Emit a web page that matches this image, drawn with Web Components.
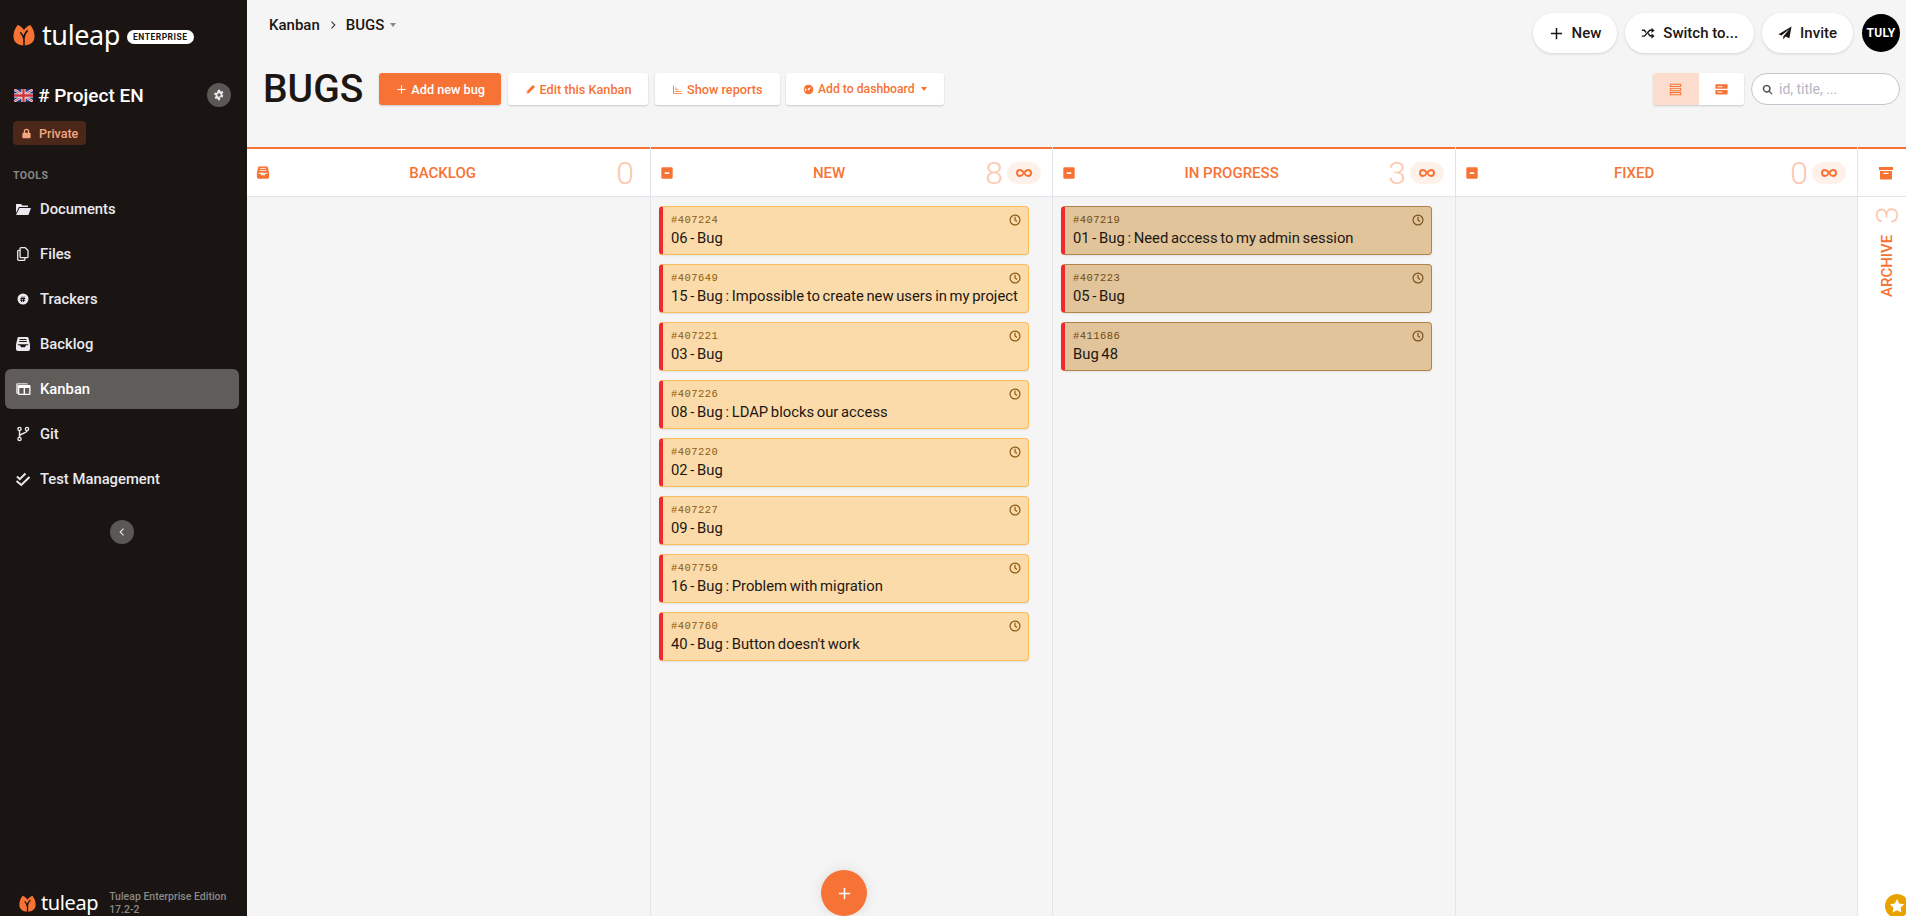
<!DOCTYPE html>
<html>
<head>
<meta charset="utf-8">
<title>BUGS - Kanban</title>
<style>
  html, body { margin: 0; height: 100%; overflow: hidden; }
  body { font-family: Roboto, "Liberation Sans", sans-serif; background: #f5f5f5; color: #1c1713; }
</style>
</head>
<body>
<tuleap-app>
  <tuleap-sidebar slot="sidebar"></tuleap-sidebar>
  <top-bar slot="top"></top-bar>
  <kanban-toolbar slot="top"></kanban-toolbar>
  <kanban-board slot="board"></kanban-board>
</tuleap-app>

<script>
  // small shared icon set, 16x16 boxes filled with currentColor
  const ICONS = {
    folder: '<path d="M1 3h5l1.500 1.500H13V6H4L1 12zM4.600 7H16l-2.600 7H1z"/>',
    files: '<path fill="none" stroke="currentColor" stroke-width="1.300" d="M6 1.700h4.200L13 4.500v6.200a.9.900 0 0 1-.9.900H6a.9.900 0 0 1-.9-.9V2.600a.9.900 0 0 1 .9-.9zM5 4.400H3.600a.9.900 0 0 0-.9.900v8.100a.9.900 0 0 0 .9.900H9a.9.900 0 0 0 .9-.9v-1.600"/>',
    tracker: '<path fill-rule="evenodd" d="M8 2.500a5.500 5.500 0 1 1 0 11 5.500 5.500 0 0 1 0-11zM6.600 5.600 6.400 6.900H5.400v1h.9l-.1.900h-1v1h.9l-.2 1.200h1l.2-1.200h1l-.2 1.200h1l.2-1.200h1v-1h-.9l.1-.9h1v-1h-.9l.2-1.300h-1l-.2 1.300h-1l.2-1.300zM7.200 7.900h1l-.1.900h-1z"/>',
    backlog: '<path fill-rule="evenodd" d="M3.600 1h8.800a1 1 0 0 1 1 .8l1.600 6.700V13a2 2 0 0 1-2 2H3a2 2 0 0 1-2-2V8.500l1.600-6.700a1 1 0 0 1 1-.8zM4.500 3v1h7V3zM4.200 5v1h7.600V5zM3 8.200l-.4 1H5l1 2h4l1-2h2.400l-.4-1z"/>',
    kanban: '<path opacity=".65" d="M1 3.500A1.500 1.500 0 0 1 2.500 2h9A1.500 1.500 0 0 1 13 3.500H3V13a1.500 1.500 0 0 1-2-1.500z"/><path fill-rule="evenodd" d="M4 4h10.500a1 1 0 0 1 1 1v8a1 1 0 0 1-1 1H4a1 1 0 0 1-1-1V5a1 1 0 0 1 1-1zm.3 3v5.700h4.300V7zm5.700 0v5.700h4.200V7z"/>',
    git: '<circle cx="4.500" cy="3" r="1.600" fill="none" stroke="currentColor" stroke-width="1.400"/><circle cx="4.500" cy="13" r="1.600" fill="none" stroke="currentColor" stroke-width="1.400"/><circle cx="12" cy="3" r="1.600" fill="none" stroke="currentColor" stroke-width="1.400"/><path fill="none" stroke="currentColor" stroke-width="1.400" d="M4.500 4.600v6.800M12 4.600c0 3.400-7.500 2.400-7.500 5.600"/>',
    check: '<path fill="none" stroke="currentColor" stroke-width="2" d="M2 5.500l2.800 2.700L10.500 2.500M1.500 10l4.800 4L14.500 6"/>',
    plus: '<path d="M7.200 2h1.600v5.200H14v1.600H8.800V14H7.200V8.800H2V7.200h5.200z"/>',
    shuffle: '<path d="M1 4h3l2.300 2.700-1.100 1.200L3.400 5.600H1zm8.600 0H12V2l3.500 3L12 8V5.600H10.400L4.300 12.400H1v-1.600h2.600zM7.800 9l1.100-1.200 1.500 2.600H12V8.500l3.500 3L12 14.500V12H9.600z"/>',
    send: '<path d="M15.500.5 13 14l-4.500-2-2.500 3.500V12L13 3.500 4 10.800.5 9.300z"/>',
    gear: '<path fill-rule="evenodd" d="M9.300 1l.4 1.800 1 .6 1.800-.6 1.300 2.300-1.400 1.200v1.400l1.400 1.200-1.300 2.300-1.800-.6-1 .6L9.300 15H6.700l-.4-1.800-1-.6-1.800.6-1.300-2.300 1.400-1.200V8.300L1.200 7.100l1.300-2.300 1.800.6 1-.6L6.700 1zM8 5.800a2.200 2.200 0 1 0 0 4.400 2.200 2.200 0 0 0 0-4.400z"/>',
    lock: '<path fill-rule="evenodd" d="M8 1a4 4 0 0 1 4 4v2h.5A1.500 1.500 0 0 1 14 8.500v5a1.500 1.500 0 0 1-1.500 1.500h-9A1.500 1.500 0 0 1 2 13.500v-5A1.500 1.500 0 0 1 3.500 7H4V5a4 4 0 0 1 4-4zm0 2a2 2 0 0 0-2 2v2h4V5a2 2 0 0 0-2-2z"/>',
    pencil: '<path d="M11.500 1.500l3 3L6 13l-4.500 1.500L3 10zM2.800 11.500l-.6 2.200 2.200-.6z"/>',
    chart: '<path d="M1.500 2h1.300v11h12v1.300H1.500zM4.500 10.500h9v1.200h-9zm0-2.500h5v1.200h-5zm0-2.500h3v1.200h-3z"/>',
    dash: '<path fill-rule="evenodd" d="M8 1a7 7 0 1 1 0 14A7 7 0 0 1 8 1zm3.800 3.200L7 7a1.300 1.300 0 1 0 2 1.700zM4 6.500 2.800 7A5 5 0 0 0 3 10.500l1.500-.5c.7-1 .4-2.500-.5-3.500z"/>',
    search: '<path fill-rule="evenodd" d="M6.800 1a5.800 5.800 0 0 1 4.700 9.200l3.800 3.800-1.400 1.400-3.800-3.800A5.800 5.800 0 1 1 6.800 1zm0 2.200a3.600 3.600 0 1 0 0 7.200 3.600 3.600 0 0 0 0-7.200z"/>',
    viewCompact: '<path fill-rule="evenodd" d="M1 1h14v4H1zm1.200 1.200v1.600h11.600V2.200zM1 6h14v4H1zm1.200 1.200v1.600h11.600V7.200zM1 11h14v4H1zm1.200 1.200v1.600h11.600v-1.600z"/>',
    viewDetail: '<path fill-rule="evenodd" d="M1.500 1.500h13a1 1 0 0 1 1 1V7h-15V2.500a1 1 0 0 1 1-1zM3 4v1.300h6V4zM.5 8.500h15v4.500a1 1 0 0 1-1 1h-13a1 1 0 0 1-1-1zM3 10.500v1.300h6v-1.300z"/>',
    collapse: '<path fill-rule="evenodd" d="M3 1.500h10A1.500 1.500 0 0 1 14.500 3v10a1.500 1.500 0 0 1-1.500 1.500H3A1.500 1.500 0 0 1 1.500 13V3A1.500 1.500 0 0 1 3 1.500zM5.500 7v2h5V7z"/>',
    archive: '<path fill-rule="evenodd" d="M1 2h14v3H1zM2 6h12v7.500a1 1 0 0 1-1 1H3a1 1 0 0 1-1-1zm3.500 1.800v1.200h5V7.800z"/>',
    infinity: '<path fill="none" stroke="currentColor" stroke-width="2" d="M8 8c-1.300-2-2.500-3-4-3a3 3 0 0 0 0 6c1.500 0 2.700-1 4-3zm0 0c1.300 2 2.500 3 4 3a3 3 0 0 0 0-6c-1.500 0-2.700 1-4 3z"/>',
    clock: '<circle cx="8" cy="8" r="6.600" fill="none" stroke="currentColor" stroke-width="1.600"/><path fill="none" stroke="currentColor" stroke-width="1.600" d="M8 3.800V8l2.700 2"/>',
    chevronLeft: '<path fill="none" stroke="currentColor" stroke-width="1.700" d="M10.500 2.500 5 8l5.500 5.500"/>'
  };
  const icon = (name, size = 16) =>
    `<svg width="${size}" height="${size}" viewBox="0 0 16 16" fill="currentColor" aria-hidden="true">${ICONS[name]}</svg>`;

  // tuleap tulip mark, used big in the sidebar head and small in the footer
  const tulip = (h) => `<svg height="${h}" width="${h}" viewBox="0 0 24 24" aria-hidden="true"><path fill="#f77335" d="M5 1C2 5 .5 9 .5 14c0 5.500 4.500 9.500 11.500 9.500S23.500 19.500 23.500 14C23.500 9 22 5 19 1c-3 1-5.500 3-7 5.500C10.500 4 8 2 5 1z"/><path fill="none" stroke="#1a1512" stroke-width="1.700" d="M12 24V15M12 15c0-3 2-6 4-8M12 17c-.5-3-2-6-4-8"/></svg>`;

  class TuleapApp extends HTMLElement {
    constructor() {
      super();
      this.attachShadow({ mode: 'open' }).innerHTML = `
        <style>
          :host { display: grid; grid-template-columns: 247px 1fr; height: 916px; width: 1906px; overflow: hidden; }
          main { display: flex; flex-direction: column; min-width: 0; height: 916px; }
        </style>
        <slot name="sidebar"></slot>
        <main><slot name="top"></slot><slot name="board"></slot></main>`;
    }
  }

  class TuleapSidebar extends HTMLElement {
    constructor() {
      super();
      const tools = [['folder', 'Documents'], ['files', 'Files'], ['tracker', 'Trackers'], ['backlog', 'Backlog'],
        ['kanban', 'Kanban', true], ['git', 'Git'], ['check', 'Test Management']];
      this.attachShadow({ mode: 'open' }).innerHTML = `
        <style>
          :host { display: flex; flex-direction: column; height: 916px; background: #1a1512; color: #fff; box-sizing: border-box; position: relative; }
          .logo { display: flex; align-items: center; height: 24px; padding: 23px 0 0 13px; }
          .word { font: 400 27px/24px "Noto Sans", sans-serif; letter-spacing: -.4px; margin-left: 7px; }
          .ent { margin-left: 7px; margin-top: 3px; background: #fff; color: #1a1512; font-weight: 700; font-size: 8.500px; letter-spacing: .5px; border-radius: 7px; height: 14px; line-height: 14px; padding: 0 6px; }
          .project { display: flex; align-items: center; margin: 36px 0 0 14px; height: 24px; }
          .flag { width: 19px; height: 13px; margin-right: 5px; display: block; }
          .project b { font-size: 19px; font-weight: 500; white-space: nowrap; }
          .gear { width: 24px; height: 24px; border-radius: 50%; background: #5a5754; color: #e9e9ef; display: flex; align-items: center; justify-content: center; margin-left: auto; margin-right: 16px; }
          .priv { display: inline-flex; align-items: center; gap: 7px; background: #4a2718; color: #f5a67f; font-size: 12.500px; font-weight: 500; height: 24px; border-radius: 4px; padding: 0 8px; margin: 14px 0 0 13px; align-self: flex-start; }
          .tools { font-size: 10.500px; font-weight: 700; letter-spacing: .5px; color: #8a8886; margin: 25px 0 0 13px; line-height: 12px; }
          nav { display: flex; flex-direction: column; gap: 5px; margin: 7px 0 0 5px; width: 234px; }
          a { display: flex; align-items: center; height: 40px; border-radius: 6px; padding-left: 9px; color: #e9e9ef; font-weight: 500; font-size: 14.800px; }
          a svg { margin-right: 8px; flex: none; width: 18px; }
          a.on { background: #5f5c59; color: #fff; }
          .fold { width: 24px; height: 24px; border-radius: 50%; background: #5a5754; color: #e9e9ef; display: flex; align-items: center; justify-content: center; margin: 21px 0 0 110px; }
          footer { margin-top: auto; display: flex; align-items: center; padding: 0 0 0 19px; height: 26px; }
          footer .word { font-size: 20px; margin-left: 5px; line-height: 22px; }
          footer .sm { font-size: 10.500px; line-height: 13px; color: #8a8886; margin-left: 11px; white-space: nowrap; font-weight: 500; align-self: flex-end; }
        </style>
        <div class="logo">${tulip(22)}<span class="word">tuleap</span><span class="ent">ENTERPRISE</span></div>
        <div class="project">
          <svg class="flag" viewBox="0 0 20 13" aria-hidden="true">
            <rect width="20" height="13" rx="1" fill="#28408a"/>
            <path stroke="#eee" stroke-width="2.600" d="M0 0l20 13M20 0 0 13"/>
            <path stroke="#d2303c" stroke-width="1" d="M0 0l20 13M20 0 0 13"/>
            <path stroke="#eee" stroke-width="4.400" d="M10 0v13M0 6.500h20"/>
            <path stroke="#d2303c" stroke-width="2.400" d="M10 0v13M0 6.500h20"/>
          </svg>
          <b># Project EN</b>
          <span class="gear">${icon('gear', 12)}</span>
        </div>
        <span class="priv">${icon('lock', 11)}Private</span>
        <div class="tools">TOOLS</div>
        <nav>${tools.map(([i, t, on]) => `<a class="${on ? 'on' : ''}">${icon(i)}${t}</a>`).join('')}</nav>
        <div class="fold">${icon('chevronLeft', 10)}</div>
        <footer>${tulip(17)}<span class="word">tuleap</span><span class="sm">Tuleap Enterprise Edition<br>17.2-2</span></footer>`;
    }
  }

  class TopBar extends HTMLElement {
    constructor() {
      super();
      this.attachShadow({ mode: 'open' }).innerHTML = `
        <style>
          :host { display: flex; align-items: center; height: 40px; padding: 13px 6px 0 22px; font-size: 15px; font-weight: 500; flex: none; }
          .crumb { display: flex; align-items: center; gap: 8px; color: #1c1713; margin-top: -16px; }
          .caret { width: 0; height: 0; border: 3.500px solid transparent; border-top: 4px solid #888; border-bottom: 0; margin-left: -2px; }
          .sep { width: 10px; height: 10px; color: #333; display: flex; }
          .right { margin-left: auto; display: flex; align-items: center; gap: 8px; }
          .pill { display: flex; align-items: center; gap: 8px; background: #fff; height: 40px; border-radius: 20px; padding: 0 16px; box-shadow: 0 1px 3px rgba(0,0,0,.14); white-space: nowrap; }
          .ava { width: 38px; height: 38px; border-radius: 50%; background: #000; color: #fff; font-size: 12px; font-weight: 700; display: flex; align-items: center; justify-content: center; letter-spacing: .3px; margin-left: 1px; }
        </style>
        <div class="crumb"><span>Kanban</span><span class="sep">${icon('chevronLeft', 10).replace('<svg', '<svg style="transform:scaleX(-1)"')}</span><span>BUGS</span><span class="caret"></span></div>
        <div class="right">
          <span class="pill">${icon('plus', 15)}New</span>
          <span class="pill">${icon('shuffle', 14)}Switch to...</span>
          <span class="pill">${icon('send', 14)}Invite</span>
          <span class="ava">TULY</span>
        </div>`;
    }
  }

  class KanbanToolbar extends HTMLElement {
    constructor() {
      super();
      this.attachShadow({ mode: 'open' }).innerHTML = `
        <style>
          :host { display: flex; align-items: center; height: 32px; padding: 20px 6px 42px 16px; flex: none; }
          h1 { font-size: 39px; font-weight: 500; margin: 0 16px 0 0; line-height: 32px; }
          .btn { display: flex; align-items: center; gap: 4px; height: 32px; box-sizing: border-box; padding: 0 17px; margin-right: 6.500px; background: #fff; color: #f77335; font-size: 12.700px; font-weight: 500; border-radius: 3px; box-shadow: 0 1px 2px rgba(0,0,0,.18); white-space: nowrap; }
          .btn.primary { background: #f77335; color: #fff; padding-right: 16px; }
          .btn.dash { font-size: 12.200px; }
          .caret { width: 0; height: 0; border: 3.500px solid transparent; border-top: 4px solid #f77335; border-bottom: 0; margin-left: 2px; }
          .switch { margin-left: auto; display: flex; height: 32px; border-radius: 3px; box-shadow: 0 1px 2px rgba(0,0,0,.18); overflow: hidden; background: #fff; color: #f77335; }
          .switch span { width: 45.500px; display: flex; align-items: center; justify-content: center; }
          .switch .on { background: #fbdccd; }
          .search { margin-left: 7px; display: flex; align-items: center; gap: 6px; width: 149px; height: 32px; box-sizing: border-box; border: 1px solid #c5c5cf; border-radius: 16px; background: #fff; padding-left: 10px; color: #b4b6c2; font-size: 14px; }
          .search svg { color: #555; }
        </style>
        <h1>BUGS</h1>
        <span class="btn primary">${icon('plus', 11)}Add new bug</span>
        <span class="btn">${icon('pencil', 11)}Edit this Kanban</span>
        <span class="btn">${icon('chart', 11)}Show reports</span>
        <span class="btn dash">${icon('dash', 11)}Add to dashboard<span class="caret"></span></span>
        <div class="switch"><span class="on">${icon('viewCompact', 13)}</span><span>${icon('viewDetail', 13)}</span></div>
        <label class="search">${icon('search', 11)}id, title, ...</label>`;
    }
  }

  class KanbanBoard extends HTMLElement {
    constructor() {
      super();
      this.attachShadow({ mode: 'open' }).innerHTML = `
        <style>
          :host { display: grid; grid-template-columns: 404px 402px 403px 402px 48px; flex: 1; min-height: 0; position: relative; }
          .fab { position: absolute; left: 574px; bottom: 0; width: 46px; height: 46px; border-radius: 50%; background: #f77335; color: #fff; display: flex; align-items: center; justify-content: center; box-shadow: 0 0 14px rgba(0,0,0,.1); }
          .star { position: absolute; right: -3px; bottom: -2px; width: 24px; height: 24px; border-radius: 50%; background: #e8a200; color: #fff; display: flex; align-items: center; justify-content: center; }
        </style>
        <kanban-column name="BACKLOG" count="0" lead="backlog" no-wip></kanban-column>
        <kanban-column name="NEW" count="8" lead="collapse">
          <kanban-card num="#407224" label="06 - Bug"></kanban-card>
          <kanban-card num="#407649" label="15 - Bug : Impossible to create new users in my project"></kanban-card>
          <kanban-card num="#407221" label="03 - Bug"></kanban-card>
          <kanban-card num="#407226" label="08 - Bug : LDAP blocks our access"></kanban-card>
          <kanban-card num="#407220" label="02 - Bug"></kanban-card>
          <kanban-card num="#407227" label="09 - Bug"></kanban-card>
          <kanban-card num="#407759" label="16 - Bug : Problem with migration"></kanban-card>
          <kanban-card num="#407760" label="40 - Bug : Button doesn't work"></kanban-card>
        </kanban-column>
        <kanban-column name="IN PROGRESS" count="3" lead="collapse">
          <kanban-card done num="#407219" label="01 - Bug : Need access to my admin session"></kanban-card>
          <kanban-card done num="#407223" label="05 - Bug"></kanban-card>
          <kanban-card done num="#411686" label="Bug 48"></kanban-card>
        </kanban-column>
        <kanban-column name="FIXED" count="0" lead="collapse"></kanban-column>
        <kanban-archive></kanban-archive>
        <span class="fab">${icon('plus', 15)}</span>
        <span class="star"><svg width="16" height="16" viewBox="0 0 16 16" fill="currentColor"><path d="M8 1l2.200 4.500 4.900.7-3.500 3.500.8 4.900L8 12.300l-4.400 2.300.8-4.900L.9 6.200l4.900-.7z"/></svg></span>`;
    }
  }

  class KanbanColumn extends HTMLElement {
    constructor() {
      super();
      const name = this.getAttribute('name');
      const wip = this.hasAttribute('no-wip') ? '' : `<span class="wip">${icon('infinity', 16)}</span>`;
      const lead = this.getAttribute('lead');
      this.attachShadow({ mode: 'open' }).innerHTML = `
        <style>
          :host { display: flex; flex-direction: column; border-right: 1px solid #e3e5ed; min-width: 0; }
          header { display: flex; align-items: center; height: 47px; padding: 0 11px 0 9px; background: #fff; border-top: 2px solid #f77335; border-bottom: 1px solid #e3e5ed; color: #f77335; font-size: 15px; font-weight: 500; flex: none; }
          .lead { display: flex; flex: none; width: 14px; }
          .name { flex: 1; text-align: center; white-space: nowrap; margin-right: 1px; }
          .side { display: flex; align-items: center; gap: 4px; flex: none; }
          .count { font-size: 32px; font-weight: 300; color: #fcc8b0; line-height: 38px; }
          .wip { width: 34px; height: 22px; border-radius: 11px; background: #fef1ea; display: flex; align-items: center; justify-content: center; }
          :host([no-wip]) .side { margin-right: 5px; }
          .cards { display: flex; flex-direction: column; gap: 9px; padding: 9px 23px 0 8px; }
        </style>
        <header><span class="lead">${icon(lead, lead === 'backlog' ? 15 : 14)}</span><span class="name">${name}</span>
          <span class="side"><span class="count">${this.getAttribute('count')}</span>${wip}</span></header>
        <div class="cards"><slot></slot></div>`;
    }
  }

  class KanbanArchive extends HTMLElement {
    constructor() {
      super();
      this.attachShadow({ mode: 'open' }).innerHTML = `
        <style>
          :host { display: flex; flex-direction: column; background: #fff; color: #f77335; min-width: 0; }
          header { height: 47px; border-top: 2px solid #f77335; border-bottom: 1px solid #e3e5ed; display: flex; align-items: center; justify-content: center; flex: none; padding-left: 8px; }
          .rot { writing-mode: vertical-rl; transform: rotate(180deg); display: flex; align-items: center; gap: 11px; margin: 9px 0 0 10px; font-size: 15px; font-weight: 500; }
          .rot i { font-style: normal; font-size: 32px; font-weight: 300; color: #fcc8b0; line-height: 28px; }
        </style>
        <header>${icon('archive', 16)}</header>
        <div class="rot"><span>ARCHIVE</span><i>3</i></div>`;
    }
  }

  class KanbanCard extends HTMLElement {
    constructor() {
      super();
      this.attachShadow({ mode: 'open' }).innerHTML = `
        <style>
          :host { display: block; position: relative; height: 49px; box-sizing: border-box; background: #fbdba9; border: 1px solid #fbbd5a; border-left: 4px solid #ee2a2a; border-radius: 4px; padding: 7px 8px 0 8px; box-shadow: 0 1px 2px rgba(0,0,0,.08); }
          :host([done]) { background: #e1c49a; border-color: #b08548; border-left-color: #ee2a2a; }
          .num { font: 10.500px/12px "Liberation Mono", monospace; color: #8a5a12; letter-spacing: .45px; display: block; }
          :host([done]) .num { color: #6f4a12; }
          .label { font-size: 14.800px; word-spacing: -1px; line-height: 20px; display: block; white-space: nowrap; margin-top: 2px; }
          .clock { position: absolute; right: 7px; top: 7px; color: #8a5a12; display: flex; }
          :host([done]) .clock { color: #7a5420; }
        </style>
        <span class="num">${this.getAttribute('num')}</span>
        <span class="label">${this.getAttribute('label')}</span>
        <span class="clock">${icon('clock', 12)}</span>`;
    }
  }

  customElements.define('kanban-card', KanbanCard);
  customElements.define('kanban-column', KanbanColumn);
  customElements.define('kanban-archive', KanbanArchive);
  customElements.define('kanban-board', KanbanBoard);
  customElements.define('kanban-toolbar', KanbanToolbar);
  customElements.define('top-bar', TopBar);
  customElements.define('tuleap-sidebar', TuleapSidebar);
  customElements.define('tuleap-app', TuleapApp);
</script>
</body>
</html>
